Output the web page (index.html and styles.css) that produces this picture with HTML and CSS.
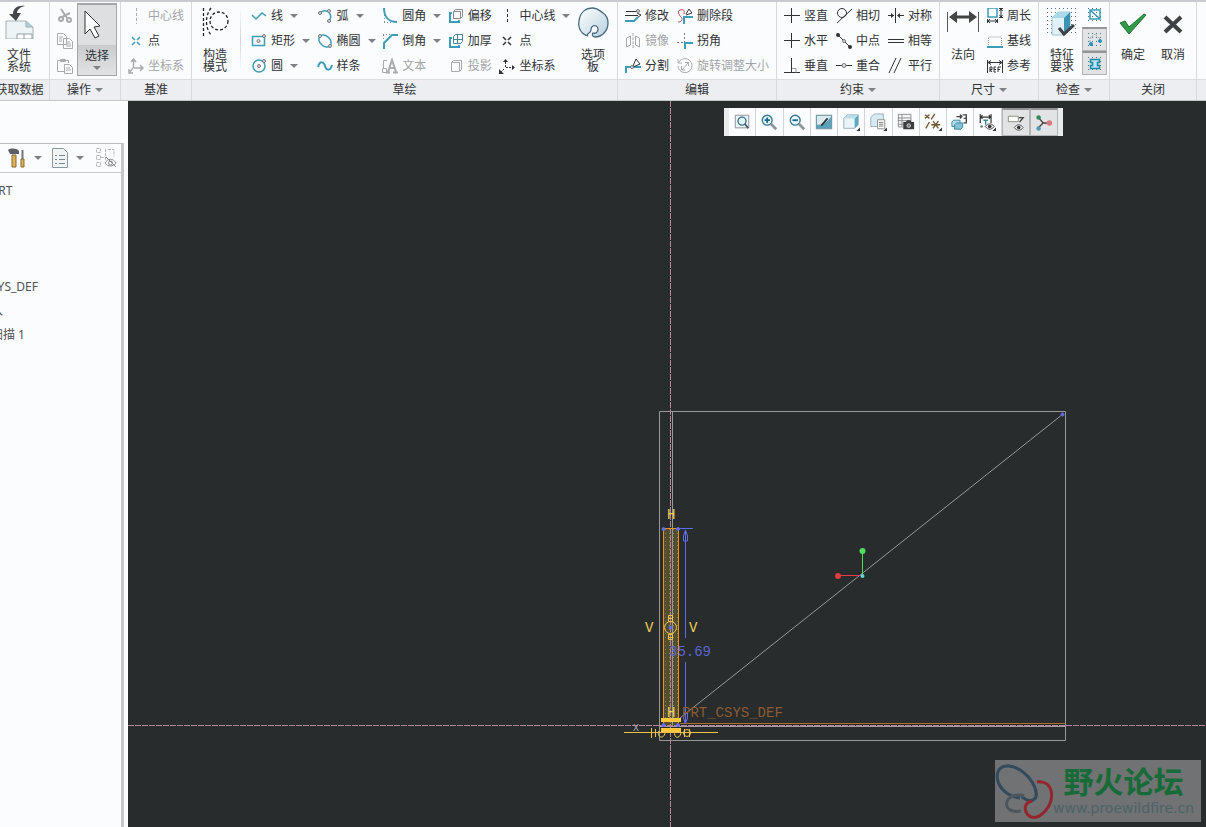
FILE: index.html
```html
<!DOCTYPE html>
<html lang="zh-CN">
<head>
    <meta charset="UTF-8">
    <title>草绘</title>
    <link rel="stylesheet" href="styles.css">
</head>
<body>
    <header class="ribbon">
        <section class="group group-data">
            <div class="group-body">
                <button class="big"><svg width="32" height="36" viewBox="0 0 32 36"><path d="M3 18h20l7 6v12H3z" fill="#eef3f6" stroke="#a9b0b5"/><path d="M23 18v6h7" fill="#a9cfdb" stroke="#a9b0b5"/><path d="M14 31h15v5H14zM21 31v5" fill="#fff" stroke="#8fa0aa"/><path d="M22 3c-7-1-12 2-12 8H6l7 7 5-8h-4c0-3 3-6 8-7z" fill="#44474a"/></svg><span>文件<br>系统</span></button>
            </div>
            <div class="group-label">获取数据</div>
        </section>

        <section class="group group-ops">
            <div class="group-body">
                <div class="icons">
                    <button class="off" aria-label="剪切"><svg class="i" viewBox="0 0 16 16"><path d="M4 1l6 9M13 5L5 9" stroke-width="2"/><circle cx="4" cy="11" r="2" stroke-width="2"/><circle cx="12" cy="12" r="2" stroke-width="2"/></svg></button>
                    <button class="off" aria-label="复制"><svg class="i" viewBox="0 0 16 16"><path d="M.5.5h6l3 3v8h-9zM6.500 5.500h6l3 3v7h-9zM2 4h4M2 6h3M2 8h3M9 9h4M9 11h5M9 13h5"/></svg></button>
                    <button class="off" aria-label="粘贴"><svg class="i" viewBox="0 0 16 16"><path d="M7 13.500H.5v-11h11V5M3.500 3.500v-2h5v2zM7.500 6.500h5l3 3v6h-8zM9 10h4M9 12h5"/></svg></button>
                </div>
                <button class="big select"><svg width="32" height="40" viewBox="0 0 32 40"><path d="M4 6v23l5-5 5 9 4-2-5-9 6-1z" fill="#fff" stroke="#333"/></svg><span>选择</span><i class="arrow"></i></button>
            </div>
            <div class="group-label">操作<i class="arrow"></i></div>
        </section>

        <section class="group group-datum">
            <div class="group-body">
                <div class="items">
                    <button class="off"><svg class="i" viewBox="0 0 16 16"><path d="M8.500 0v16" stroke-dasharray="3 2"/></svg>中心线</button>
                    <button><svg class="i" viewBox="0 0 16 16"><path class="t" d="M4 4l3 3M12 4L9 7M4 12l3-3M12 12L9 9" stroke-width="1.500"/></svg>点</button>
                    <button class="off"><svg class="i" viewBox="0 0 16 16"><path d="M5.500 10V2M3 4l2.500-3L8 4M6 10h8M12 7l3 3-3 3M5 10l-4 5M1 11v4h4" stroke-width="1.500"/></svg>坐标系</button>
                </div>
            </div>
            <div class="group-label">基准</div>
        </section>

        <section class="group group-sketch">
            <div class="group-body">
                <button class="big"><svg width="32" height="36" viewBox="0 0 32 36"><g fill="none" stroke="#222" stroke-width="1.300" stroke-dasharray="3 2"><path d="M4.500 5v28M12 5c-6 8-6 19 0 27"/><circle cx="20" cy="18" r="9"/></g></svg><span>构造<br>模式</span></button>
                <i class="divider"></i>
                <div class="items wide">
                    <button><svg class="i" viewBox="0 0 16 16"><path class="t" d="M1 7l4 4 6-6 4 3" stroke-width="1.500"/></svg>线<i class="arrow"></i></button>
                    <button><svg class="i" viewBox="0 0 16 16"><path class="t" d="M1.500 3.500h12v9h-12z" stroke-width="1.500"/><circle class="dot" cx="7.500" cy="8" r="1.500"/><circle class="dot" cx="13" cy="3" r="1.500"/></svg>矩形<i class="arrow"></i></button>
                    <button><svg class="i" viewBox="0 0 16 16"><circle class="t" cx="8" cy="8" r="6" stroke-width="1.500"/><circle class="dot" cx="8" cy="8" r="1.500"/><circle class="dot" cx="13" cy="3" r="1.500"/></svg>圆<i class="arrow"></i></button>
                </div>
                <div class="items wide">
                    <button><svg class="i" viewBox="0 0 16 16"><path class="t" d="M4 4c8-4 12 4 8 9" stroke-width="1.500"/><circle class="dot" cx="3" cy="5" r="1.500"/><circle class="dot" cx="12" cy="3" r="1.500"/><circle class="dot" cx="12" cy="13" r="1.500"/></svg>弧<i class="arrow"></i></button>
                    <button><svg class="i" viewBox="0 0 16 16"><ellipse class="t" cx="8" cy="8" rx="7" ry="5" transform="rotate(42 8 8)" stroke-width="1.500"/><circle class="dot" cx="3" cy="3" r="1.500"/><circle class="dot" cx="13" cy="13" r="1.500"/></svg>椭圆<i class="arrow"></i></button>
                    <button><svg class="i" viewBox="0 0 16 16"><path class="t" d="M1 9c2-7 6-5 7-1s5 6 7-1" stroke-width="2"/></svg>样条</button>
                </div>
                <div class="items wide">
                    <button><svg class="i" viewBox="0 0 16 16"><path d="M2.500 4v10M2 14.500h9" stroke="#888" stroke-dasharray="1 2"/><path class="t" d="M2 0c0 9 5 14 13 14" stroke-width="2"/></svg>圆角<i class="arrow"></i></button>
                    <button><svg class="i" viewBox="0 0 16 16"><path d="M1 1.500h11M1.500 2v6" stroke="#888" stroke-dasharray="1 2"/><path class="t" d="M2 16V10l8-8h6" stroke-width="2"/></svg>倒角<i class="arrow"></i></button>
                    <button class="off"><svg class="i" viewBox="0 0 16 16"><path d="M5 2.500H1.500V10M.5 10.500h4v4h-4z"/><path d="M6 14l4-12 4 12M7 10h6M4 14.500h4M11 14.500h5" stroke-width="2"/></svg>文本</button>
                </div>
                <div class="items wide-50">
                    <button><svg class="i" viewBox="0 0 16 16"><path d="M5.500 3.500l2-2h7v7l-2 2h-7zM6 3.500h6.500V10" stroke="#888"/><path class="t" d="M4 5H2v9h9v-2" stroke-width="2"/></svg>偏移</button>
                    <button><svg class="i" viewBox="0 0 16 16"><path d="M5.500 3.500l2-2h7v7l-2 2h-7zM9.500 2v9M6 6.500h8" stroke="#4a8296"/><path class="t" d="M4 5H2v9h9v-2" stroke-width="2"/></svg>加厚</button>
                    <button class="off"><svg class="i" viewBox="0 0 16 16"><path d="M3.500 4.500l2-2h8v9l-2 2h-8zM4 4.500h7.500V13"/></svg>投影</button>
                </div>
                <div class="items wide-75">
                    <button><svg class="i" viewBox="0 0 16 16"><path d="M8.500 1v14" stroke-dasharray="3 2"/></svg>中心线<i class="arrow"></i></button>
                    <button><svg class="i" viewBox="0 0 16 16"><path d="M4 4l3 3M12 4L9 7M4 12l3-3M12 12L9 9" stroke-width="1.500"/></svg>点</button>
                    <button><svg class="i" viewBox="0 0 16 16"><path d="M6.500 9V2M7 9.500h7M5 11l-3 3" stroke-dasharray="2 1"/><path d="M4 4l2.500-3L9 4zM13 7l3 2.500-3 2.500zM0 11v5h5z" class="solid"/></svg>坐标系</button>
                </div>
                <button class="big"><svg width="32" height="36" viewBox="0 0 32 36"><defs><linearGradient id="pal" x1="0" y1="0" x2="1" y2="1"><stop offset="0" stop-color="#fff"/><stop offset="1" stop-color="#b7d0df"/></linearGradient></defs><path d="M11 33C4 31 1 25 2 18 3 9 9 5 16 5c5 0 7 3 10 5s5 6 5 10c0 8-6 14-13 14-3 0-3-3-2-4 3 1 5-1 5-4 0-3-3-4-5-3-4 2 0 5-4 7-2 1-2 3-1 3z" fill="url(#pal)" stroke="#46677f" stroke-width="1.300"/></svg><span>选项<br>板</span></button>
            </div>
            <div class="group-label">草绘</div>
        </section>

        <section class="group group-edit">
            <div class="group-body">
                <div class="items wide-50">
                    <button><svg class="i" viewBox="0 0 16 16"><path d="M1 3.500h11M0 7.500h13M12 5l4 2-4 3"/><path class="t" d="M0 13h9l4-4" stroke-width="2"/><circle class="dot" cx="13" cy="3" r="1.500"/></svg>修改</button>
                    <button class="off"><svg class="i" viewBox="0 0 16 16"><path d="M1.500 5l4-2v9l-4 2zM14.500 5l-4-2v9l4 2z"/><path d="M8 0v16" stroke-dasharray="3 1"/></svg>镜像</button>
                    <button><svg class="i" viewBox="0 0 16 16"><path class="t" d="M1 15V9h7M8 9h8" stroke-width="2"/><path d="M8 8l3-7 4 5-7 3"/><circle class="dot" cx="7" cy="9" r="1.500"/></svg>分割</button>
                </div>
                <div class="items">
                    <button><svg class="i" viewBox="0 0 16 16"><path d="M1 14c4 0 5-3 3-5s-4-6-1-7 5 0 4 4" stroke="#b8434c"/><path class="t" d="M7 16V9h9" stroke-width="2"/><path d="M9 6l3-5 3 4-6 2"/></svg>删除段</button>
                    <button><svg class="i" viewBox="0 0 16 16"><path d="M0 9.500h8M7.500 0v9" stroke="#777" stroke-dasharray="2 2"/><path class="t" d="M8 16v-6h8" stroke-width="2"/></svg>拐角</button>
                    <button class="off"><svg class="i" viewBox="0 0 16 16"><path d="M2 4a7 7 0 1 1-1 4M1 1v4h4M5 12l6-7M8 4.500h3.500V8M4.500 8v4H8"/></svg>旋转调整大小</button>
                </div>
            </div>
            <div class="group-label">编辑</div>
        </section>

        <section class="group group-constrain">
            <div class="group-body">
                <div class="items wide-50">
                    <button><svg class="i" viewBox="0 0 16 16"><path d="M7.500 0v15M0 7.500h16"/></svg>竖直</button>
                    <button><svg class="i" viewBox="0 0 16 16"><path d="M7.500 0v15M0 7.500h16"/></svg>水平</button>
                    <button><svg class="i" viewBox="0 0 16 16"><path d="M7.500 0v15M0 14.500h16"/><path d="M8 10.500h4v4" stroke="#999"/></svg>垂直</button>
                </div>
                <div class="items wide-50">
                    <button><svg class="i" viewBox="0 0 16 16"><circle cx="6" cy="5" r="4.500"/><path d="M1 15L16 1"/></svg>相切</button>
                    <button><svg class="i" viewBox="0 0 16 16"><path d="M2 2l12 12"/><circle class="solid" cx="2" cy="2" r="2"/><circle class="solid" cx="14" cy="14" r="2"/><circle class="dot" cx="8" cy="8" r="1.500"/></svg>中点</button>
                    <button><svg class="i" viewBox="0 0 16 16"><path d="M0 7.500h16"/><circle class="dot" cx="8" cy="7.500" r="2"/></svg>重合</button>
                </div>
                <div class="items">
                    <button><svg class="i" viewBox="0 0 16 16"><path d="M7.500 0v15M0 7.500h6M10 7.500h6"/><path class="solid" d="M3 5l3 2.500L3 10zM12 5L9 7.500l3 2.500z"/></svg>对称</button>
                    <button><svg class="i" viewBox="0 0 16 16"><path d="M0 6.500h16M0 9.500h16"/></svg>相等</button>
                    <button><svg class="i" viewBox="0 0 16 16"><path d="M1 15L8 0M6 15l7-15"/></svg>平行</button>
                </div>
            </div>
            <div class="group-label">约束<i class="arrow"></i></div>
        </section>

        <section class="group group-dim">
            <div class="group-body">
                <button class="big"><svg width="32" height="36" viewBox="0 0 32 36"><path d="M.5 9v20M31.500 9v20" stroke="#555"/><path d="M6 14h20" stroke="#444" stroke-width="3"/><path d="M2 14l8-6v12zM30 14l-8-6v12z" fill="#444"/></svg><span>法向</span></button>
                <div class="items">
                    <button><svg class="i" viewBox="0 0 16 16"><path class="t" d="M1 0h9v9H1z" stroke-width="1.500"/><path d="M12 .5h4M12 9.500h4M14 1v8M12.500 3L14 1l1.500 2M12.500 7L14 9l1.500-2M.5 11v4M10.500 11v4M1 13h9M3 11l-2 2 2 2M8 11l2 2-2 2"/></svg>周长</button>
                    <button><svg class="i" viewBox="0 0 16 16"><path d="M1.500 12V4h13v8" stroke="#999" stroke-dasharray="1 1"/><path class="t" d="M0 14h16" stroke-width="2"/></svg>基线</button>
                    <button><svg class="i" viewBox="0 0 16 16"><path d="M.5 2v13M15.500 2v13M2 4.500h12M4 2.500l-3 2 3 2M12 2.500l3 2-3 2M3 14V9h2v2.500H3l2 2.500M9 9H7v5h2M7 11.500h2M11 14V9h3M11 11.500h2"/></svg>参考</button>
                </div>
            </div>
            <div class="group-label">尺寸<i class="arrow"></i></div>
        </section>

        <section class="group group-check">
            <div class="group-body">
                <button class="big"><svg width="32" height="36" viewBox="0 0 32 36"><defs><pattern id="grid" width="4" height="4" patternUnits="userSpaceOnUse"><path d="M1 1h1v1H1z" fill="#4c7289"/></pattern></defs><path d="M1 4h30v29H1z" fill="url(#grid)"/><path d="M6 15l6-6h12v16l-6 7H6z" fill="#e2f1f7" stroke="#9fc6d4"/><path d="M6 15l6-6h12l-6 6z" fill="#a9d9ea"/><path d="M18 15l6-6v16l-6 6z" fill="#3a93b2"/><path d="M13 25l5 6 10-9" fill="none" stroke="#3f4245" stroke-width="3"/></svg><span>特征<br>要求</span></button>
                <div class="toggles">
                    <button aria-label="着色封闭环"><svg class="i" viewBox="0 0 16 16"><path d="M0 0h16v16H0z" fill="url(#grid)" stroke="none"/><path class="t" d="M3 3v9h10V3zM3 3l10 9" stroke-width="1.500"/></svg></button>
                    <button class="on" aria-label="突出显示开放端"><svg class="i" viewBox="0 0 16 16"><path d="M0 0h16v16H0z" fill="url(#grid)" stroke="none"/><path d="M3 10V6l5-4 5 5" stroke="#9aabb3" stroke-dasharray="2 1"/><circle cx="4" cy="12" r="1.500" fill="#2694b8" stroke="#2694b8"/><circle cx="13" cy="9" r="1.500" fill="#2694b8" stroke="#2694b8"/></svg></button>
                    <button class="on" aria-label="重叠几何"><svg class="i" viewBox="0 0 16 16"><path d="M0 0h16v16H0z" fill="url(#grid)" stroke="none"/><path d="M3.500 3.500h9v3h-2v3h2v3h-9v-3h2v-3h-2z" fill="#b9e4f0" stroke="#1f87a8" stroke-width="1.500"/></svg></button>
                </div>
            </div>
            <div class="group-label">检查<i class="arrow"></i></div>
        </section>

        <section class="group group-close">
            <div class="group-body">
                <button class="big"><svg width="32" height="36" viewBox="0 0 32 36"><path d="M3 20l5-2 4 6L27 11l2 1-17 19z" fill="#2e9b46" stroke="#25733a"/></svg><span>确定</span></button>
                <button class="big"><svg width="32" height="36" viewBox="0 0 32 36"><path d="M8 14l16 15M24 14L8 29" stroke="#3f4245" stroke-width="4"/></svg><span>取消</span></button>
            </div>
            <div class="group-label">关闭</div>
        </section>

        <section class="group group-rest">
            <div class="group-body"></div>
            <div class="group-label"></div>
        </section>
    </header>

    <main class="workspace">
        <aside class="sidebar">
            <div class="tree-panel">
                <div class="tree-tools">
                    <button aria-label="设置"><svg width="20" height="20" viewBox="0 0 20 20"><path d="M4 7h4v12H4z" fill="#dbb25c" stroke="#8b682b"/><path d="M0 2c3-2 8-2 11 1v3H2z" fill="#5c5e63"/><path d="M14.500 2v9" stroke="#777" stroke-width="2"/><path d="M13 11h3v8h-3z" fill="#dbb25c" stroke="#8b682b"/></svg><i class="arrow"></i></button>
                    <button aria-label="显示"><svg width="20" height="20" viewBox="0 0 20 20"><path d="M2.500.5h11l4 4v15h-15z" fill="#f0f4f5" stroke="#8b979c"/><path d="M9 7.500h6M9 11.500h6M9 15.500h6M5 7.500h2M5 11.500h2M5 15.500h2" stroke="#7a878c"/></svg><i class="arrow"></i></button>
                    <button class="hide-btn" aria-label="隐藏"><svg width="22" height="20" viewBox="0 0 22 20"><g fill="none" stroke="#b5b8ba"><path d="M1.500.5h4v4h-4zM1.500 7.500h4v4h-4zM1.500 14.500h4v4h-4zM6 9.500h4M10.500 1v12M13 1.500h6v7" stroke-dasharray="3 1"/><path d="M10 15c3-5 8-5 11 0-3 4-8 4-11 0zM11 9l10 10" stroke="#8a8d90"/><circle cx="15.500" cy="15" r="2" stroke="#8a8d90"/></g></svg></button>
                </div>
                <ul class="tree">
                    <li>PRT</li>
                    <li></li>
                    <li></li>
                    <li></li>
                    <li>SYS_DEF</li>
                    <li>入</li>
                    <li>扫描 1</li>
                </ul>
            </div>
        </aside>

        <div class="canvas">
            <svg class="drawing">
                <defs>
                    <pattern id="hatch" width="4" height="4" patternUnits="userSpaceOnUse"><path d="M1 1h1v1H1z" fill="#8a7d3c"/></pattern>
                </defs>
                <g transform="translate(-128 -101)" fill="none">
                    <!-- section fill -->
                    <path d="M663 529h16v196h-16z" fill="#544e31"/>
                    <path d="M663 529h16v196h-16z" fill="url(#hatch)"/>
                    <!-- sketch frame -->
                    <path d="M659.500 411.500h406v329h-406zM672.500 411v315" stroke="#979899"/>
                    <path d="M680 718L1063 414" stroke="#979899"/>
                    <path d="M660 726.500h406" stroke="#a99ba3"/>
                    <path d="M680 723.500h385" stroke="#b06a24"/>
                    <!-- reference axes -->
                    <path d="M670.500 101v1600M128 725.500h3000" stroke="#b38399" stroke-dasharray="6 1"/>
                    <path d="M663.500 725V528.500h15V725" stroke="#f0921a"/>
                    <!-- dimension -->
                    <g stroke="#636dea">
                        <path d="M679 528.500h14M685.500 530v108M685.500 662v60M683.500 541v-5l2-6 2 6v5zM683.500 713v5l2 6 2-6v-5z"/>
                        <g fill="#636dea"><circle cx="663.500" cy="529" r="1.500"/><circle cx="678" cy="529" r="1.500"/><circle cx="663.500" cy="725" r="1.500"/><circle cx="678" cy="725" r="1.500"/><circle cx="1062.500" cy="414.500" r="1.500"/><circle cx="670.500" cy="627.500" r="1.500"/></g>
                    </g>
                    <text x="669" y="656" fill="#5c66d0">35.69</text>
                    <text x="682" y="717" fill="#8b5b31">PRT_CSYS_DEF</text>
                    <!-- constraint marks -->
                    <g stroke="#f0c24b">
                        <circle cx="670.500" cy="627.500" r="6"/>
                        <path d="M668.500 615.500h4v3h-4zM668.500 618.500h4v3h-4zM668.500 634.500h4v3h-4zM668.500 637.500h4v2h-4z"/>
                        <path d="M624 732.500h94M651.500 728v10M655.500 729v8M659 731c-3 6 5 9 6 2M675 731c-2 8 5 8 6 2M684.500 729v8M689.500 729v8"/>
                        <circle cx="687" cy="733" r="3.500"/>
                        <path d="M661 720h20M661 730h20" stroke="#ffc53c" stroke-width="4"/>
                    </g>
                    <g class="marks" fill="#f0cf55">
                        <text x="667" y="519">H</text>
                        <text x="645" y="632">V</text>
                        <text x="689" y="632">V</text>
                        <text x="667" y="717">H</text>
                    </g>
                    <text class="axis" x="633" y="731" fill="#a9a3b8">X</text>
                    <!-- spin center -->
                    <path d="M862.500 551v24" stroke="#4fe05c"/>
                    <path d="M838 575.500h24" stroke="#ea3b45"/>
                    <circle cx="862.500" cy="551" r="3" fill="#4fe05c"/>
                    <circle cx="838" cy="576" r="3" fill="#e03a45"/>
                    <circle cx="862.500" cy="576" r="2" fill="#5ed6e0"/>
                </g>
            </svg>

            <div class="view-tools">
                <button aria-label="重新调整"><svg viewBox="0 0 20 20"><path d="M2.500 2.500h15v14h-15z" fill="#eef5f7" stroke="#889"/><circle cx="10" cy="9" r="4.500" fill="#e5f5fa" stroke="#37778f" stroke-width="1.500"/><path d="M13 12l4 5" stroke="#456" stroke-width="2"/></svg></button>
                <button aria-label="放大"><svg viewBox="0 0 20 20"><circle cx="8" cy="8" r="5.500" fill="#e9f6fa" stroke="#37778f" stroke-width="1.500"/><path d="M5 8h6M8 5v6" stroke="#126b8d" stroke-width="2"/><path d="M12 12l6 6" stroke="#89979d" stroke-width="3"/></svg></button>
                <button aria-label="缩小"><svg viewBox="0 0 20 20"><circle cx="8" cy="8" r="5.500" fill="#e9f6fa" stroke="#37778f" stroke-width="1.500"/><path d="M5 8h6" stroke="#126b8d" stroke-width="2"/><path d="M12 12l6 6" stroke="#89979d" stroke-width="3"/></svg></button>
                <button aria-label="重画"><svg viewBox="0 0 20 20"><path d="M1.500 2.500h17v15h-17z" fill="#d8ebf1" stroke="#587987"/><path d="M2 17v-4c8 1 12-4 16-9v13z" fill="#5aa3bd"/><path d="M7 14l7-8" stroke="#333" stroke-width="2"/></svg></button>
                <button aria-label="显示样式"><svg viewBox="0 0 20 20"><path d="M2 6l4-4h12v11l-4 4H2z" fill="#eaf5fa" stroke="#9ab"/><path d="M14 6l4-4v11l-4 4z" fill="#5ba9c4"/><path d="M2 6l4-4h12l-4 4z" fill="#bbdde9"/><path d="M20 16v4h-4z" fill="#333"/></svg></button>
                <button aria-label="已保存方向"><svg viewBox="0 0 20 20"><path d="M2 5l4-4h10v10l-4 4H2z" fill="#d5eaf2" stroke="#9ab"/><path d="M9.500 7.500h8v10h-8z" fill="#fff" stroke="#888"/><path d="M11 10.500h5M11 12.500h5M11 14.500h5" stroke="#777"/><path d="M20 16v4h-4z" fill="#333"/></svg></button>
                <button aria-label="视图管理器"><svg viewBox="0 0 20 20"><path d="M1.500 1.500h14v14h-14zM1 5.500h14M1 8.500h14M1 12.500h14M5.500 2v13" fill="#f5f5f5" stroke="#888"/><path d="M7 10h3l1-2h4l1 2h3v8H7z" fill="#3b3d40"/><circle cx="13" cy="14" r="2" fill="#777" stroke="#ddd"/></svg></button>
                <button aria-label="基准显示"><svg viewBox="0 0 20 20"><path d="M1 2l5 4M6 2L1 6M12 1l-4 6M6 10l-4 7M8 13h10M10 9l6 8M16 9l-6 8" fill="none" stroke="#6e592d" stroke-width="1.500"/><path d="M20 16v4h-4z" fill="#333"/></svg></button>
                <button aria-label="草绘视图"><svg viewBox="0 0 20 20"><path d="M6 4h6M10 2l2 2-2 2M13 2h4v9h-3M14 6h3" fill="none" stroke="#444" stroke-width="1.500"/><path d="M1 10l2-2h7v5l-2 2H1z" fill="#b9dfea" stroke="#34869f"/><path d="M4 13l2-2h7v5l-2 2H4z" fill="#84c3d6" stroke="#34869f"/></svg></button>
                <button aria-label="草绘器显示"><svg viewBox="0 0 20 20"><path d="M2.500 1v10M14.500 1v10M3 4.500h11M5 2.500l-2 2 2 2M12 2.500l2 2-2 2" fill="none" stroke="#333" stroke-width="1.300"/><path d="M6 8h5M8.500 8v5" stroke="#37869d" stroke-width="1.500"/><path d="M8 15c3-4 7-4 10 0-3 4-7 4-10 0z" fill="#eee" stroke="#444"/><circle cx="13" cy="15" r="2" fill="#333"/><circle cx="4" cy="15" r="1.500" fill="#777"/><path d="M20 16v4h-4z" fill="#333"/></svg></button>
                <button class="on" aria-label="注释显示"><svg viewBox="0 0 20 20"><path d="M1.500 2.500h11v6h-11z" fill="#fff" stroke="#887"/><path d="M13 4h5l-4 5" fill="none" stroke="#444" stroke-width="1.500"/><path d="M8 15c3-4 7-4 10 0-3 4-7 4-10 0z" fill="#eee" stroke="#444"/><circle cx="13" cy="15" r="2" fill="#333"/></svg></button>
                <button class="on" aria-label="旋转中心"><svg viewBox="0 0 20 20"><path d="M4 4l5 6h7M9 10l-5 5" fill="none" stroke="#444" stroke-width="1.500"/><circle cx="4" cy="4" r="2.500" fill="#338a5e"/><circle cx="16" cy="10" r="3" fill="#d97880"/><circle cx="4" cy="16" r="2.500" fill="#4e9ab2"/></svg></button>
            </div>

            <div class="watermark">
                <svg width="58" height="62" viewBox="0 0 58 62" fill="none">
                    <path d="M25 38C-1 35-5 4 14 6c20 2 34 30 24 34-5 2-11-2-12-6" stroke="#334a5c" stroke-width="3"/>
                    <path d="M42 22c17-2 18 18 9 28-9 11-17 8-20 2-2-5 0-10 6-11" stroke="#93262c" stroke-width="3"/>
                    <path d="M29 36c-12-4-21 5-16 12 2 3 7 4 13 3" stroke="#4d565c" stroke-width="3"/>
                </svg>
                <div>
                    <strong>野火论坛</strong>
                    <a href="#">www.proewildfire.cn</a>
                </div>
            </div>
        </div>
    </main>
</body>
</html>
```
FILE: styles.css
```css
* { box-sizing: border-box; }

body {
  margin: 0;
  height: 100vh;
  display: flex;
  flex-direction: column;
  overflow: hidden;
  background: #fbfcfd;
  color: #303236;
  font: 12px/16px "Noto Sans", "Noto Sans CJK SC", sans-serif;
}

button {
  display: flex;
  align-items: center;
  padding: 0;
  border: 0;
  background: none;
  color: inherit;
  font: inherit;
  white-space: nowrap;
}

/* Ribbon */
.ribbon {
  display: flex;
  flex: none;
  border-top: 2px solid #c9cacf;
  border-bottom: 1px solid #c3c8c9;
}

.group {
  display: flex;
  flex-direction: column;
  flex: none;
  border-right: 1px solid #d7d9dc;
}

.group-body {
  display: flex;
  height: 77px;
  padding: 1px 0 0 7px;
}

.group-label {
  display: flex;
  align-items: center;
  justify-content: center;
  height: 21px;
  background: #eceef1;
  border-top: 1px solid #dcdee1;
}

.group-label .arrow { margin-left: 4px; }

/* the first group is scrolled partly out of view */
.group-data { width: 60px; margin-left: -10px; }
.group-data .group-body { padding-left: 13px; }
.group-ops { width: 71px; }
.group-datum { width: 71px; }
.group-sketch { width: 426px; }
.group-edit { width: 159px; }
.group-constrain { width: 163px; }
.group-dim { width: 99px; }
.group-check { width: 71px; }
.group-close { width: 87px; }
.group-close .group-body { gap: 8px; }
.group-rest { flex: 1; border-right: 0; }

.items { display: flex; flex-direction: column; }
.items button { height: 25px; gap: 4px; }
.items .arrow { margin-left: 3px; }
.wide { width: 66px; }
.wide-50 { width: 52px; }
.wide-75 { width: 78px; }

.icons { width: 20px; }
.icons button { height: 25px; }

.i {
  width: 16px;
  height: 16px;
  flex: none;
  fill: none;
  stroke: #303236;
}

.i .t { stroke: #3d9cb8; }
.i .dot { fill: #ddd; stroke: #777; }
.i .solid { fill: #303236; stroke: none; }

.off { color: #a2a5a8; }
.off .i { stroke: #a9acaf; }

.arrow {
  width: 0;
  height: 0;
  border: 4px solid transparent;
  border-top-color: #7d8084;
  border-bottom: 0;
}

.big {
  flex-direction: column;
  width: 32px;
  height: 73px;
  line-height: 12px;
}

.big span { padding-top: 10px; }
.group-dim .big { margin-right: 8px; }
.group-sketch > .group-body > .big { margin: 0 8px 0 0; }
.group-check .big { margin-right: 4px; }

.select {
  width: 40px;
  border: 1px solid #a4a6a9;
  border-top-width: 2px;
  background: linear-gradient(#dedfe1 40px, #c9cbcd 40px, #e2e3e5);
}

.select span { padding-top: 5px; }
.select .arrow { margin-top: 4px; }

.divider {
  width: 1px;
  height: 65px;
  margin: 4px 10px 0 1px;
  background: linear-gradient(#fbfcfd, #d3d5d8, #fbfcfd);
}

.toggles button {
  width: 25px;
  height: 24px;
  justify-content: center;
}

.toggles .on,
.view-tools .on {
  border: 1px solid #b3b5b8;
  border-top: 2px solid #929497;
  background: #e1e3e5;
}

/* Model tree */
.workspace {
  display: flex;
  flex: 1;
  min-height: 0;
}

.sidebar {
  display: flex;
  flex: 0 0 128px;
  padding: 42px 4px 0 0;
  overflow: hidden;
}

.tree-panel {
  flex: 1;
  border-top: 1px solid #bcbec0;
  border-right: 3px solid #c5c7c9;
}

.tree-tools {
  display: flex;
  gap: 8px;
  height: 29px;
  padding: 0 4px 0 8px;
  border-bottom: 1px solid #c8cacc;
}

.tree-tools button { gap: 6px; }
.tree-tools .hide-btn { margin-left: auto; }

.tree {
  margin: 6px 0 0 -9px;
  padding: 0;
  list-style: none;
  color: #505256;
}

.tree li { height: 24px; line-height: 24px; }

/* Drawing area */
.canvas {
  position: relative;
  flex: 1;
  background: #282c2d;
}

.drawing {
  display: block;
  width: 100%;
  height: 100%;
}

.drawing text { font: 14px "Liberation Mono", monospace; }
.drawing .axis { font-size: 10px; }

.view-tools {
  position: absolute;
  top: 7px;
  right: 143px;
  display: flex;
  width: 339px;
  padding: 0 5px;
  background: #e9ebed;
}

.view-tools button {
  flex: 1;
  height: 28px;
  justify-content: center;
  background: #fbfcfd;
  border-right: 1px solid #d2d4d6;
}

.view-tools svg { width: 18px; height: 18px; }

.watermark {
  position: absolute;
  right: 5px;
  bottom: 5px;
  display: flex;
  width: 206px;
  height: 62px;
  background: #707273;
}

.watermark div {
  display: flex;
  flex-direction: column;
  align-items: center;
}

.watermark strong {
  color: #176b38;
  font: 700 30px/40px "Noto Sans CJK SC", sans-serif;
}

.watermark a {
  color: #4d6366;
  font: 14px/16px "DejaVu Sans", sans-serif;
  text-decoration: none;
}
```
